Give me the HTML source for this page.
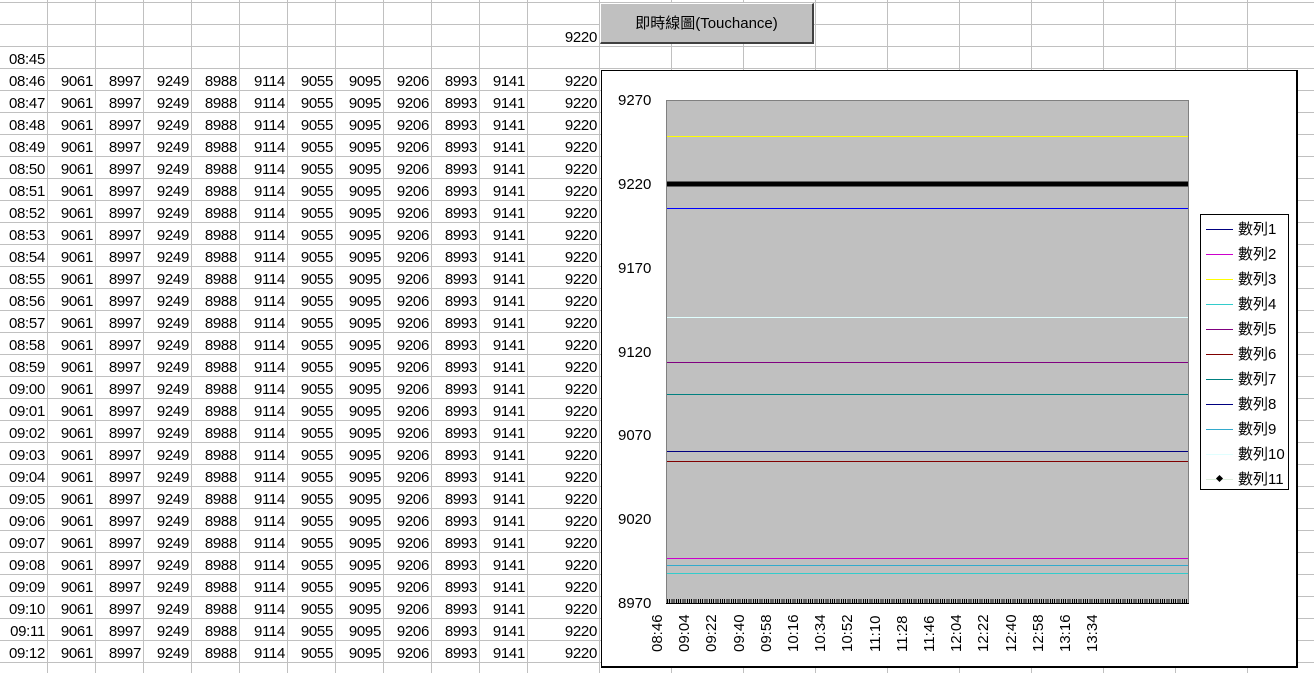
<!DOCTYPE html>
<html><head><meta charset="utf-8"><style>
*{margin:0;padding:0;box-sizing:border-box}
body{width:1314px;height:673px;overflow:hidden;background:#fff;position:relative;font-family:"Liberation Sans","Noto Sans CJK TC",sans-serif;font-size:15px;color:#000}
.h{position:absolute;left:0;top:2px;width:1314px;height:680px;background:repeating-linear-gradient(to bottom,#c0c0c0 0 1px,transparent 1px 22px)}
.va{position:absolute;left:0;top:0;width:528px;height:673px;background:repeating-linear-gradient(to right,transparent 0 47px,#c0c0c0 47px 48px)}
.vb{position:absolute;left:599px;top:0;width:720px;height:673px;background:repeating-linear-gradient(to right,#c0c0c0 0 1px,transparent 1px 72px)}
.r{position:absolute;left:0;height:21px;line-height:26px;display:flex;white-space:nowrap}
.r span{width:48px;text-align:right;padding-right:3px;letter-spacing:-0.3px}
.r span.l{width:72px}
.btn{position:absolute;left:600px;top:3px;width:214px;height:41px;background:#c0c0c0;border-right:2px solid #404040;border-bottom:2px solid #404040;border-top:1px solid #fff;border-left:1px solid #fff;text-align:center;line-height:40px;font-size:15px}
.chart{position:absolute;left:601px;top:70px;width:697px;height:598px;background:#fff;border:1px solid #000;border-right-width:2px;border-bottom-width:2px}
.yl{position:absolute;left:16px;font-size:15px}
.xl{position:absolute;top:581px;transform:rotate(-90deg);transform-origin:left top;font-size:15px;white-space:nowrap}
.leg{position:absolute;left:598px;top:143px;width:89px;height:276px;border:1px solid #000;background:#fff}
.li{position:absolute;left:37px;height:20px;font-size:15px;line-height:20px;white-space:nowrap}
</style></head><body>
<div class="h"></div><div class="va"></div><div class="vb"></div>
<div class="r" style="top:25px"><span></span><span></span><span></span><span></span><span></span><span></span><span></span><span></span><span></span><span></span><span></span><span class="l">9220</span></div>
<div class="r" style="top:47px"><span>08:45</span></div>
<div id="rows"></div>
<div class="btn">即時線圖(Touchance)</div>
<div class="chart">
<div class="yl" style="top:21px">9270</div>
<div class="yl" style="top:105px">9220</div>
<div class="yl" style="top:189px">9170</div>
<div class="yl" style="top:273px">9120</div>
<div class="yl" style="top:356px">9070</div>
<div class="yl" style="top:440px">9020</div>
<div class="yl" style="top:524px">8970</div>
<svg style="position:absolute;left:0;top:0" width="697" height="598">
<rect x="64.5" y="29.5" width="522" height="503" fill="#c0c0c0" stroke="#808080"/>
<line x1="64" y1="532.5" x2="587" y2="532.5" stroke="#000"/>
<line x1="65" y1="65.5" x2="586" y2="65.5" stroke="#ffff00"/>
<line x1="65" y1="113" x2="586" y2="113" stroke="#000" stroke-width="5"/>
<line x1="65" y1="137.5" x2="586" y2="137.5" stroke="#0000ff"/>
<line x1="65" y1="246.5" x2="586" y2="246.5" stroke="#e0ffff"/>
<line x1="65" y1="291.5" x2="586" y2="291.5" stroke="#800080"/>
<line x1="65" y1="323.5" x2="586" y2="323.5" stroke="#008080"/>
<line x1="65" y1="380.5" x2="586" y2="380.5" stroke="#000080"/>
<line x1="65" y1="390.5" x2="586" y2="390.5" stroke="#800000"/>
<line x1="65" y1="487.5" x2="586" y2="487.5" stroke="#cc00cc"/>
<line x1="65" y1="494.5" x2="586" y2="494.5" stroke="#33aacc"/>
<line x1="65" y1="502.5" x2="586" y2="502.5" stroke="#33cccc"/>
</svg>
<div style="position:absolute;left:65px;top:528px;width:521px;height:5px;background:repeating-linear-gradient(to right,#000 0 1px,transparent 1px 2.2px)"></div>
<div id="xl"></div>
<div class="leg">
<svg style="position:absolute;left:0;top:0" width="89" height="276">
<g stroke-width="1">
<line x1="5" x2="32" y1="14.5" y2="14.5" stroke="#000080"/>
<line x1="5" x2="32" y1="39.5" y2="39.5" stroke="#cc00cc"/>
<line x1="5" x2="32" y1="64.5" y2="64.5" stroke="#ffff00"/>
<line x1="5" x2="32" y1="89.5" y2="89.5" stroke="#33cccc"/>
<line x1="5" x2="32" y1="114.5" y2="114.5" stroke="#800080"/>
<line x1="5" x2="32" y1="139.5" y2="139.5" stroke="#800000"/>
<line x1="5" x2="32" y1="164.5" y2="164.5" stroke="#008080"/>
<line x1="5" x2="32" y1="189.5" y2="189.5" stroke="#000080"/>
<line x1="5" x2="32" y1="214.5" y2="214.5" stroke="#33aacc"/>
<line x1="5" x2="32" y1="239.5" y2="239.5" stroke="#e0ffff"/>
<line x1="5" x2="32" y1="264.5" y2="264.5" stroke="#ddeedd"/>
</g>
<rect x="16" y="261" width="5" height="5" fill="#000" transform="rotate(45 18.5 263.5)"/>
</svg>
<div class="li" style="top:5px">數列1</div>
<div class="li" style="top:30px">數列2</div>
<div class="li" style="top:55px">數列3</div>
<div class="li" style="top:80px">數列4</div>
<div class="li" style="top:105px">數列5</div>
<div class="li" style="top:130px">數列6</div>
<div class="li" style="top:155px">數列7</div>
<div class="li" style="top:180px">數列8</div>
<div class="li" style="top:205px">數列9</div>
<div class="li" style="top:230px">數列10</div>
<div class="li" style="top:255px">數列11</div>
</div>
</div>
<script>
var h='';
for(var i=0;i<27;i++){var m=46+i,hh=8;if(m>=60){m-=60;hh=9}var t=(hh<10?'0':'')+hh+':'+(m<10?'0':'')+m;
h+='<div class="r" style="top:'+(69+22*i)+'px"><span>'+t+'</span><span>9061</span><span>8997</span><span>9249</span><span>8988</span><span>9114</span><span>9055</span><span>9095</span><span>9206</span><span>8993</span><span>9141</span><span class="l">9220</span></div>';}
document.getElementById('rows').outerHTML=h;
var L=['08:46','09:04','09:22','09:40','09:58','10:16','10:34','10:52','11:10','11:28','11:46','12:04','12:22','12:40','12:58','13:16','13:34'],x='';
for(var j=0;j<L.length;j++){x+='<div class="xl" style="left:'+(47+j*27.2)+'px">'+L[j]+'</div>';}
document.getElementById('xl').outerHTML=x;
</script>
</body></html>
